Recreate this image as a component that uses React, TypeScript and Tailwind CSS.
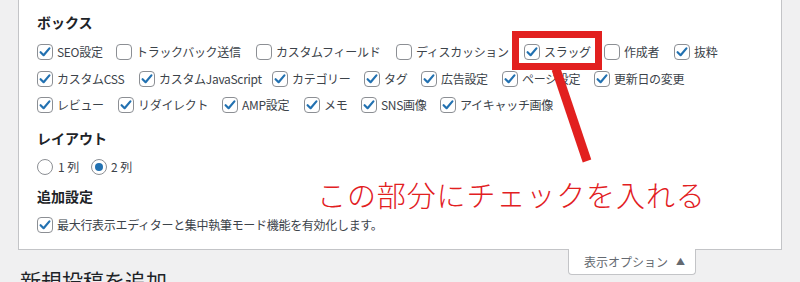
import React from "react";

const FONT = {
  fontFamily: '"Noto Sans CJK JP", "Noto Sans", "Liberation Sans", sans-serif',
};

type Item = { label: string; checked: boolean; w: string };

const rows: Item[][] = [
  [
    { label: "SEO設定", checked: true, w: "w-[79px]" },
    { label: "トラックバック送信", checked: false, w: "w-[140px]" },
    { label: "カスタムフィールド", checked: false, w: "w-[140px]" },
    { label: "ディスカッション", checked: false, w: "w-[128px]" },
    { label: "スラッグ", checked: true, w: "w-[80px]" },
    { label: "作成者", checked: false, w: "w-[70px]" },
    { label: "抜粋", checked: true, w: "w-[60px]" },
  ],
  [
    { label: "カスタムCSS", checked: true, w: "w-[102px]" },
    { label: "カスタムJavaScript", checked: true, w: "w-[133px]" },
    { label: "カテゴリー", checked: true, w: "w-[92px]" },
    { label: "タグ", checked: true, w: "w-[57px]" },
    { label: "広告設定", checked: true, w: "w-[81px]" },
    { label: "ページ設定", checked: true, w: "w-[92px]" },
    { label: "更新日の変更", checked: true, w: "w-[100px]" },
  ],
  [
    { label: "レビュー", checked: true, w: "w-[81px]" },
    { label: "リダイレクト", checked: true, w: "w-[104px]" },
    { label: "AMP設定", checked: true, w: "w-[82px]" },
    { label: "メモ", checked: true, w: "w-[57px]" },
    { label: "SNS画像", checked: true, w: "w-[79px]" },
    { label: "アイキャッチ画像", checked: true, w: "w-[130px]" },
  ],
];

function Checkbox({ checked }: { checked: boolean }) {
  return (
    <span className="w-[16px] h-[16px] shrink-0 rounded-[4px] border border-[#8c8f94] bg-white flex items-center justify-center">
      {checked && (
        <svg width="14" height="14" viewBox="0 0 14 14">
          <path
            d="M2.6 7.2 L5.6 10.2 L11.4 3.4"
            fill="none"
            stroke="#2271b1"
            strokeWidth="2.2"
            strokeLinecap="round"
            strokeLinejoin="round"
          />
        </svg>
      )}
    </span>
  );
}

function Radio({ checked }: { checked: boolean }) {
  return (
    <span className="w-[16px] h-[16px] shrink-0 rounded-full border border-[#8c8f94] bg-white flex items-center justify-center">
      {checked && <span className="w-[8px] h-[8px] rounded-full bg-[#2271b1]" />}
    </span>
  );
}

function CheckItem({ item }: { item: Item }) {
  return (
    <label className={`flex items-center gap-[4px] shrink-0 ${item.w}`}>
      <Checkbox checked={item.checked} />
      <span className="whitespace-nowrap">{item.label}</span>
    </label>
  );
}

export default function App() {
  return (
    <div
      className="relative w-[800px] h-[282px] overflow-hidden bg-[#f0f0f1] text-[#3c434a]"
      style={FONT}
    >
      {/* Screen options panel */}
      <div className="ml-[18px] w-[764px] h-[250px] bg-white border-x border-b border-[#c3c4c7] px-[18px] pt-[12px]">
        <div className="h-[20px] flex items-center text-[14px] font-semibold text-[#1d2327]">
          ボックス
        </div>
        <div className="mt-[7px] text-[12px] tracking-[-0.3px]">
          {rows.map((row, i) => (
            <div key={i} className="flex items-center h-[26.5px]">
              {row.map((item) => (
                <CheckItem key={item.label} item={item} />
              ))}
            </div>
          ))}
        </div>

        <div className="mt-[10px] h-[20px] flex items-center text-[14px] font-semibold text-[#1d2327]">
          レイアウト
        </div>
        <div className="mt-[5px] h-[26px] flex items-center text-[12px]">
          <label className="flex items-center gap-[5px] w-[54px]">
            <Radio checked={false} />
            <span>1 列</span>
          </label>
          <label className="flex items-center gap-[4px]">
            <Radio checked={true} />
            <span>2 列</span>
          </label>
        </div>

        <div className="mt-[7px] h-[20px] flex items-center text-[14px] font-semibold text-[#1d2327]">
          追加設定
        </div>
        <div className="mt-[5px] h-[26px] flex items-center text-[12px] tracking-[-0.3px]">
          <label className="flex items-center gap-[4px]">
            <Checkbox checked={true} />
            <span>最大行表示エディターと集中執筆モード機能を有効化します。</span>
          </label>
        </div>
      </div>

      {/* Below panel: page title + tab */}
      <div className="flex items-start -mt-[1px]">
        <h1 className="w-[568px] pl-[20px] pt-[19px] text-[21px] leading-[24px] font-normal text-[#1d2327] whitespace-nowrap">
          新規投稿を追加
        </h1>
        <div className="w-[128px] h-[26px] bg-white border-x border-b border-[#c3c4c7] rounded-b-[4px] flex items-center pl-[15px] gap-[8px] text-[12px] text-[#646970]">
          <span>表示オプション</span>
          <span className="text-[9px] text-[#646970]">▲</span>
        </div>
      </div>

      {/* Red annotation */}
      <div className="absolute left-[512px] top-[31px] w-[90px] h-[39px] border-[7px] border-[#e2201f]" />
      <svg
        className="absolute left-0 top-0"
        width="800"
        height="282"
        viewBox="0 0 800 282"
      >
        <line
          x1="556"
          y1="69"
          x2="587"
          y2="161"
          stroke="#e2201f"
          strokeWidth="9"
          strokeLinecap="butt"
        />
      </svg>
      <div className="absolute left-[317px] top-[180px] text-[29px] leading-[29px] tracking-[0.9px] font-light text-[#e2201f] whitespace-nowrap">
        この部分にチェックを入れる
      </div>
    </div>
  );
}
